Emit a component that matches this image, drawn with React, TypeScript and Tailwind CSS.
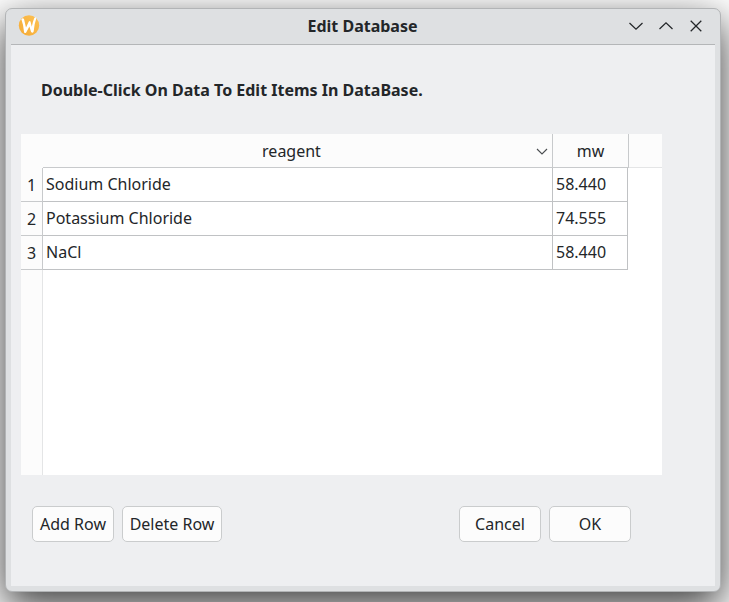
import type { ReactNode } from "react";

const rows = [
  { reagent: "Sodium Chloride", mw: "58.440" },
  { reagent: "Potassium Chloride", mw: "74.555" },
  { reagent: "NaCl", mw: "58.440" },
];

function WindowButton({ label, d }: { label: string; d: string }) {
  return (
    <button type="button" aria-label={label} className="flex size-[18px] items-center justify-center">
      <svg width="18" height="18" viewBox="0 0 18 18" fill="none" stroke="#232629" strokeWidth="1.25">
        <path d={d} />
      </svg>
    </button>
  );
}

function PushButton({ wide, children }: { wide?: boolean; children: ReactNode }) {
  return (
    <button
      type="button"
      className={`h-9 rounded-[5px] border border-[#cacccd] bg-[#fcfcfc] text-center whitespace-nowrap ${wide ? "w-[100px]" : "w-[82px]"}`}
    >
      {children}
    </button>
  );
}

function WaylandLogo() {
  return (
    <svg width="22" height="22" viewBox="0 0 22 22" aria-hidden="true">
      <defs>
        <linearGradient id="logo-fill" x1="0" y1="1" x2="1" y2="0">
          <stop offset="0" stopColor="#f5aa35" />
          <stop offset="1" stopColor="#fdc254" />
        </linearGradient>
      </defs>
      <circle cx="11" cy="10.5" r="10.2" fill="url(#logo-fill)" />
      <path
        d="M3.3 4 Q4.9 2.3 6 4 L8 12.4 L10.8 6.4 Q11.8 5.4 12.5 6.6 L13.8 11.8 Q14.5 7 16.3 2.9 Q17.8 1.3 18.4 3.1 Q16.3 9 15.6 16.8 Q14.6 18.4 13.1 17 L11.4 11.4 L8.2 17.6 Q6.8 18.8 6.1 17.2 Q5.5 10 3.3 4Z"
        fill="#ffffff"
      />
    </svg>
  );
}

export default function App() {
  return (
    <div className="flex h-screen min-h-[480px] overflow-hidden bg-white pt-2 pr-2 pb-[10px] pl-[5px] font-['Noto_Sans',sans-serif] text-base text-[#232629]">
      <div
        role="dialog"
        aria-labelledby="window-title"
        className="flex min-w-0 flex-1 flex-col rounded-[7px] border border-[#b2b4b6] bg-[#dee0e2] px-[5px] pb-[5px] shadow-[0_14px_40px_1px_rgba(0,0,0,0.76)]"
      >
        <header className="flex h-9 shrink-0 items-center border-b border-[#b4b6b8] pr-[10px] pb-px pl-[9px]">
          <div className="flex flex-1">
            <div className="-ml-0.5">
              <WaylandLogo />
            </div>
          </div>
          <h1 id="window-title" className="text-base font-bold">
            Edit Database
          </h1>
          <div className="flex flex-1 justify-end gap-3">
            <WindowButton label="Minimize" d="M2.5 6 L9 12.2 L15.5 6" />
            <WindowButton label="Maximize" d="M2.5 12 L9 5.8 L15.5 12" />
            <WindowButton label="Close" d="M3.7 3.7 L14.3 14.3 M14.3 3.7 L3.7 14.3" />
          </div>
        </header>

        <main className="flex min-h-0 flex-1 flex-col bg-[#eeeff1] pr-[53px] pb-11 pl-[10px]">
          <p className="pt-[33px] pb-8 pl-5 font-bold">Double-Click On Data To Edit Items In DataBase.</p>

          <div className="flex min-h-0 flex-1 flex-col bg-white">
            <table className="w-full table-fixed border-separate border-spacing-0">
              <colgroup>
                <col className="w-[22px]" />
                <col />
                <col className="w-[76px]" />
                <col className="w-[33px]" />
              </colgroup>
              <thead className="bg-[#fcfcfc]">
                <tr className="h-[34px]">
                  <td className="p-0" />
                  <th className="border-r border-b border-[#c8cacc] p-0 font-normal">
                    <div className="flex items-center pr-1">
                      <span className="flex-1 pl-1">reagent</span>
                      <svg width="12" height="12" viewBox="0 0 12 12" fill="none" stroke="#4a4d50" strokeWidth="1.1" aria-hidden="true">
                        <path d="M1 4 L6 9 L11 4" />
                      </svg>
                    </div>
                  </th>
                  <th className="border-r border-b border-[#c8cacc] p-0 font-normal">mw</th>
                  <td className="border-b border-[#e4e5e6] p-0" />
                </tr>
              </thead>
              <tbody>
                {rows.map((row, index) => (
                  <tr key={row.reagent} className="h-[34px]">
                    <th className="border-r border-b border-[#c8cacc] bg-[#fcfcfc] p-0 pt-px font-normal">{index + 1}</th>
                    <td className="p-0">
                      <div className="h-[34px] border-r border-b border-[#c0c2c4] pl-[3px] leading-[33px]">{row.reagent}</div>
                    </td>
                    <td className="p-0 pr-px">
                      <div className="h-[34px] border-r border-b border-[#c0c2c4] pl-[3px] leading-[33px]">{row.mw}</div>
                    </td>
                    <td className="p-0" />
                  </tr>
                ))}
              </tbody>
            </table>
            <div className="w-[22px] flex-1 border-r border-[#e4e5e6] bg-[#fcfcfc]" />
          </div>

          <div className="flex justify-between pt-[31px] pr-[31px] pl-[11px]">
            <div className="flex gap-2">
              <PushButton>Add Row</PushButton>
              <PushButton wide>Delete Row</PushButton>
            </div>
            <div className="flex gap-2">
              <PushButton>Cancel</PushButton>
              <PushButton>OK</PushButton>
            </div>
          </div>
        </main>
      </div>
    </div>
  );
}
